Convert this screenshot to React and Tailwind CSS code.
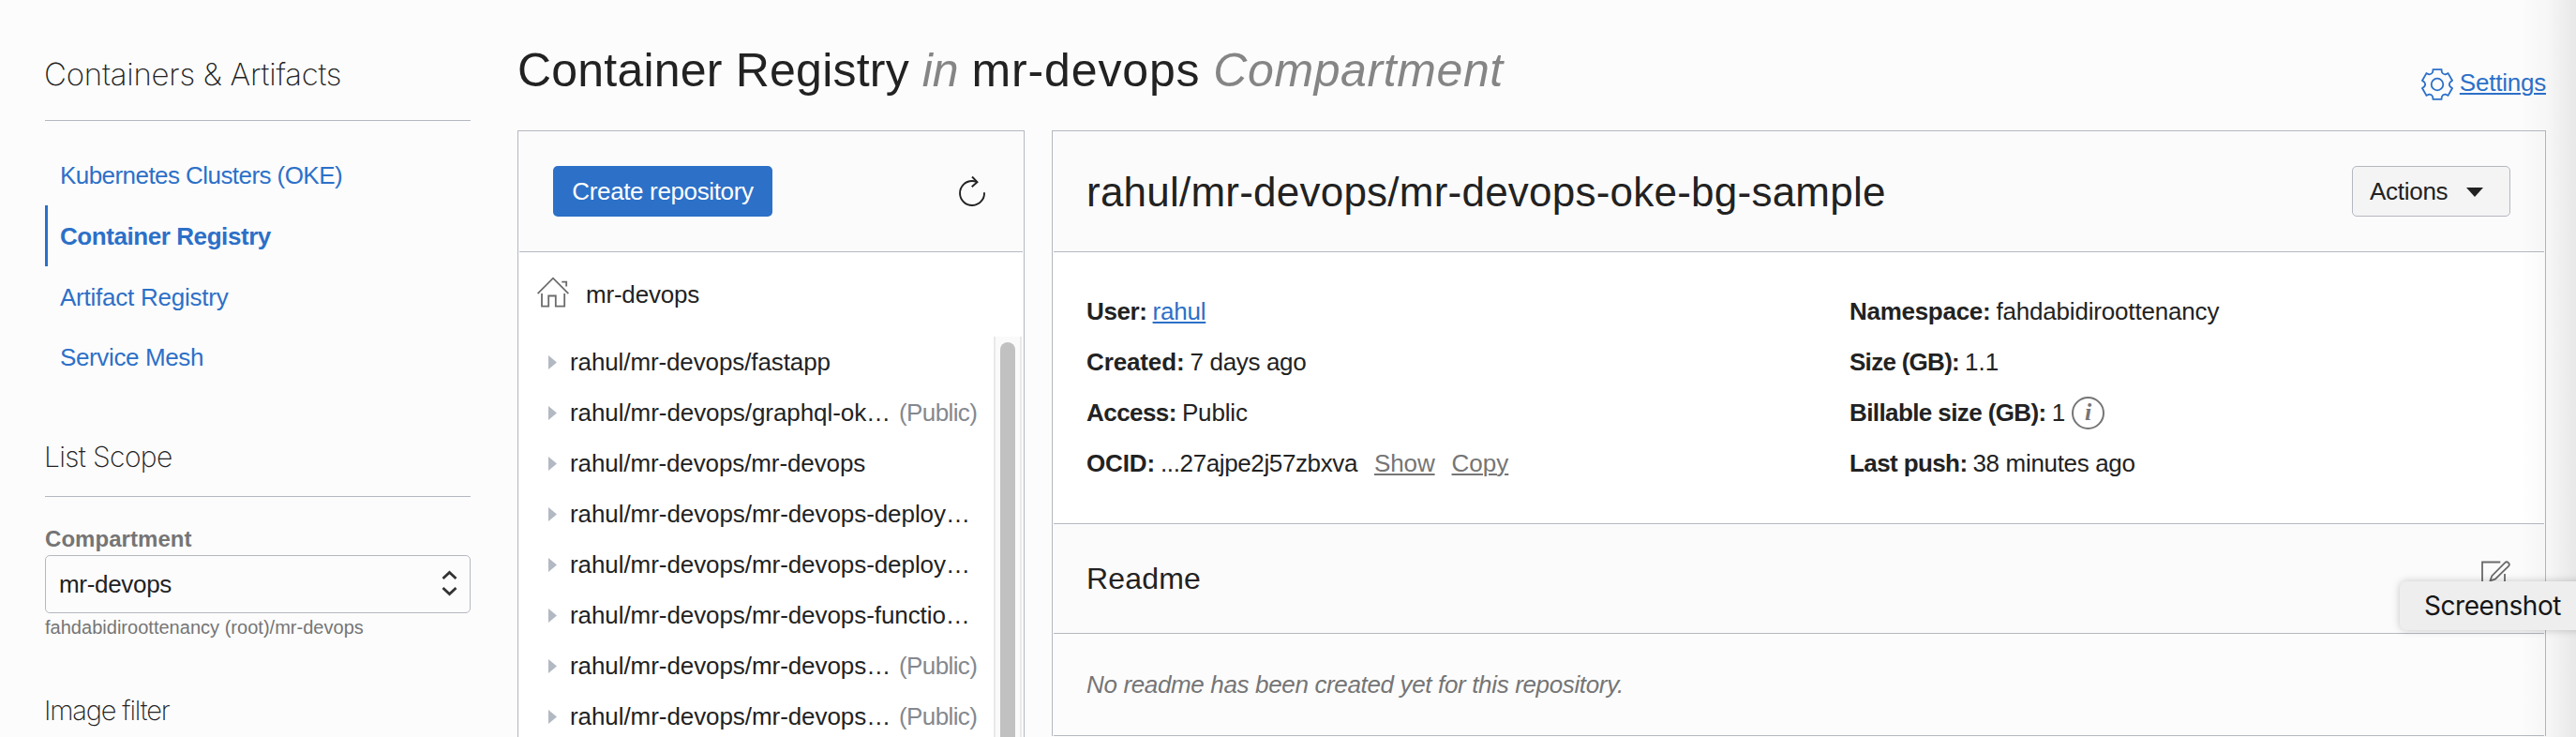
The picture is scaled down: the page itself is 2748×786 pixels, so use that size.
import React from "react";

const repositories = [
  { name: "rahul/mr-devops/fastapp", tight: true },
  { name: "rahul/mr-devops/graphql-ok…", isPublic: true },
  { name: "rahul/mr-devops/mr-devops", tight: true },
  { name: "rahul/mr-devops/mr-devops-deploy…" },
  { name: "rahul/mr-devops/mr-devops-deploy…" },
  { name: "rahul/mr-devops/mr-devops-functio…" },
  { name: "rahul/mr-devops/mr-devops…", isPublic: true },
  { name: "rahul/mr-devops/mr-devops…", isPublic: true },
];

function gearPath() {
  const rotate = (x, y, deg) => {
    const a = (deg * Math.PI) / 180;
    return `${(x * Math.cos(a) - y * Math.sin(a) + 17).toFixed(2)} ${(x * Math.sin(a) + y * Math.cos(a) + 17).toFixed(2)}`;
  };
  let d = "";
  for (let k = 0; k < 6; k++) {
    const t = k * 60;
    d += `${k ? "L" : "M"}${rotate(-4.5, -15.9, t)}L${rotate(4.5, -15.9, t)}L${rotate(4.9, -13, t)}Q${rotate(6, -10.4, t)} ${rotate(-4.9, -13, t + 60)}`;
  }
  return d + "Z";
}

function GearIcon() {
  return (
    <svg width="34" height="34" viewBox="0 0 34 34" fill="none" stroke="#2c70c8" strokeWidth="1.8" className="shrink-0">
      <path d={gearPath()} />
      <circle cx="17" cy="17" r="6.3" />
    </svg>
  );
}

function RefreshIcon() {
  return (
    <svg width="30" height="34" viewBox="0 0 30 34" fill="none" stroke="#222" strokeWidth="1.9">
      <path d="M28 18.2A13 13 0 1 1 15 6Q17.500 6 20 7" />
      <path d="M15 1.500L20.500 7.200L14.700 12.300" />
    </svg>
  );
}

function HomeIcon() {
  return (
    <svg width="34" height="34" viewBox="0 0 34 34" fill="none" stroke="#6b6b6b" strokeWidth="1.8">
      <path d="M.6 18.200L17 1.700L33.400 18.200" />
      <path d="M26.300 5.700H31.200V10.500" />
      <path d="M5 18V31.700H12.200V20.500H19.800V31.700H29.200V18" />
    </svg>
  );
}

function EditIcon() {
  return (
    <svg width="34" height="34" viewBox="0 0 34 34" fill="none" stroke="#6b6b6b" strokeWidth="1.8">
      <path d="M21.300 2.500H2V28.500H26V15" />
      <path d="M10.500 22.300L12.300 17.200L26.200 3.200A2.500 2.500 0 0 1 30 6.800L15.800 20.600Z" />
    </svg>
  );
}

function Sidebar() {
  return (
    <aside className="flex h-full w-[454px] shrink-0 flex-col pt-[59px]">
      <h2 className="whitespace-nowrap border-b border-[#b4b8c0] pb-[29px] font-[Inter,sans-serif] text-[33px] font-extralight leading-[40px] tracking-[-0.24px] -indent-[1px]">
        Containers &amp; Artifacts
      </h2>
      <nav className="mt-[25px] flex flex-col whitespace-nowrap text-[#2c70c8]">
        <a className="h-[65px] pl-[16px] pt-[20px] leading-[26px] tracking-[-0.56px]">Kubernetes Clusters (OKE)</a>
        <a className="h-[65px] border-l-[3px] border-[#2c70c8] pl-[13px] pt-[20px] font-bold leading-[26px] tracking-[-0.43px]">Container Registry</a>
        <a className="h-[65px] pl-[16px] pt-[20px] leading-[26px] tracking-[-0.24px]">Artifact Registry</a>
        <a className="h-[65px] pl-[16px] pt-[19px] leading-[26px] tracking-[-0.37px]">Service Mesh</a>
      </nav>
      <h3 className="mt-[55px] border-b border-[#b4b8c0] pb-[24px] font-[Inter,sans-serif] text-[30px] font-extralight leading-[36px] tracking-[-0.64px] -indent-[1px]">
        List Scope
      </h3>
      <label className="mt-[30px] text-[24px] font-bold leading-[30px] tracking-[0.05px] text-[#757575]">Compartment</label>
      <div className="mt-[2px] flex h-[62px] items-center justify-between rounded-[5px] border border-[#b4b8c0] pl-[14px] pr-[13px]">
        <span className="tracking-[-0.31px]">mr-devops</span>
        <svg width="17" height="28" viewBox="0 0 17 28" fill="none" stroke="#333" strokeWidth="2.800" className="-mt-[3px]">
          <path d="M1.500 9L8.500 2.500L15.500 9M1.500 19L8.500 25.500L15.500 19" />
        </svg>
      </div>
      <p className="mt-[3px] whitespace-nowrap text-[20px] leading-[24px] tracking-[0.02px] text-[#757575]">fahdabidiroottenancy (root)/mr-devops</p>
      <h3 className="mt-[59px] font-[Inter,sans-serif] text-[29px] font-extralight leading-[36px] tracking-[-1.15px] -indent-[1px]">
        Image filter
      </h3>
    </aside>
  );
}

function RepositoryList() {
  return (
    <section className="flex h-[647px] w-[541px] shrink-0 flex-col overflow-hidden border border-b-0 border-[#b4b8c0] px-px">
      <div className="flex h-[129px] shrink-0 items-center justify-between border-b border-[#b4b8c0] bg-[#fbfbfb] pl-[36px] pr-[39px]">
        <button className="h-[54px] w-[234px] rounded-[5px] bg-[#2c70c8] tracking-[-0.36px] text-white">Create repository</button>
        <RefreshIcon />
      </div>
      <div className="flex h-[90px] shrink-0 items-center bg-white pl-[19px]">
        <span className="-mt-[5px]">
          <HomeIcon />
        </span>
        <span className="ml-[18px] tracking-[-0.2px]">mr-devops</span>
      </div>
      <div className="flex bg-white">
        <ul className="w-[506px]">
          {repositories.map((repo, i) => (
            <li key={i} className="flex h-[54px] items-center whitespace-nowrap pl-[31px]">
              <svg width="9" height="15" viewBox="0 0 9 15" fill="#b3b9c3">
                <path d="M0 0L9 7.500L0 15Z" />
              </svg>
              <span className={repo.tight ? "ml-[14px] tracking-[-0.11px]" : "ml-[14px] w-[351px] tracking-[-0.07px]"}>{repo.name}</span>
              {repo.isPublic && <span className="tracking-[-0.61px] text-[#85888d]">(Public)</span>}
            </li>
          ))}
        </ul>
        <div className="flex w-[30px] justify-center border-l-2 border-r-2 border-[#e9e9e9] bg-[#fafafa] pt-[6px]">
          <div className="h-[600px] w-[16px] rounded-full bg-[#c1c1c1]" />
        </div>
      </div>
    </section>
  );
}

function Row({ label, labelClass, children }) {
  return (
    <div className="flex h-[54px] items-center gap-1.5 whitespace-nowrap">
      <span className={labelClass}>{label}</span>
      {children}
    </div>
  );
}

function RepositoryDetails() {
  return (
    <section className="flex h-[646px] w-[1594px] shrink-0 flex-col border border-b-0 border-[#b4b8c0] px-px">
      <div className="flex h-[129px] shrink-0 items-center justify-between border-b border-[#b4b8c0] bg-[#fbfbfb] pl-[35px] pr-[36px]">
        <h2 className="mt-[1px] whitespace-nowrap text-[44px] leading-[52px] tracking-[0.23px]">rahul/mr-devops/mr-devops-oke-bg-sample</h2>
        <button className="flex h-[54px] w-[169px] items-center rounded-[5px] border border-[#b4b8c0] bg-[#f4f4f4] pl-[18px]">
          <span className="tracking-[-0.28px]">Actions</span>
          <svg width="18" height="10" viewBox="0 0 18 10" fill="#222" className="ml-[20px] mt-[2px]">
            <path d="M0 0H18L9 10Z" />
          </svg>
        </button>
      </div>
      <div className="flex h-[290px] shrink-0 border-b border-[#b4b8c0] bg-white pl-[35px] pt-[36px]">
        <div className="w-[814px]">
          <Row label="User:" labelClass="font-bold tracking-[-0.38px]">
            <a className="tracking-[-0.23px] text-[#2c70c8] underline decoration-2 underline-offset-2">rahul</a>
          </Row>
          <Row label="Created:" labelClass="font-bold tracking-[-0.12px]">
            <span className="tracking-[-0.34px]">7 days ago</span>
          </Row>
          <Row label="Access:" labelClass="font-bold tracking-[-0.55px]">
            <span className="tracking-[-0.14px]">Public</span>
          </Row>
          <Row label="OCID:" labelClass="font-bold tracking-[-0.13px]">
            <span className="tracking-[-0.38px]">...27ajpe2j57zbxva</span>
            <a className="ml-[12px] tracking-[-0.12px] text-[#757575] underline decoration-2 underline-offset-2">Show</a>
            <a className="ml-[12px] text-[#757575] underline decoration-2 underline-offset-2">Copy</a>
          </Row>
        </div>
        <div>
          <Row label="Namespace:" labelClass="font-bold tracking-[-0.28px]">
            <span className="tracking-[-0.18px]">fahdabidiroottenancy</span>
          </Row>
          <Row label="Size (GB):" labelClass="font-bold tracking-[-0.72px]">
            <span>1.1</span>
          </Row>
          <Row label="Billable size (GB):" labelClass="font-bold tracking-[-0.6px]">
            <span>1</span>
            <span className="ml-[1px] flex size-[35px] items-center justify-center rounded-full border-2 border-[#757575] font-['Liberation_Serif',serif] text-[26px] font-bold italic leading-none text-[#757575]">
              i
            </span>
          </Row>
          <Row label="Last push:" labelClass="font-bold tracking-[-0.6px]">
            <span className="tracking-[-0.33px]">38 minutes ago</span>
          </Row>
        </div>
      </div>
      <div className="flex h-[117px] shrink-0 items-center justify-between border-b border-[#b4b8c0] bg-[#fbfbfb] pl-[35px] pr-[34px]">
        <h3 className="text-[32px] leading-[40px] tracking-[0.17px]">Readme</h3>
        <span className="-mt-[6px]">
          <EditIcon />
        </span>
      </div>
      <div className="flex h-[109px] shrink-0 items-center border-b border-[#b4b8c0] pl-[35px]">
        <p className="italic tracking-[-0.35px] text-[#757575]">No readme has been created yet for this repository.</p>
      </div>
    </section>
  );
}

export default function App() {
  return (
    <div className="relative flex h-[786px] w-[2748px] overflow-hidden bg-[#fcfcfc] pl-[48px] font-['Liberation_Sans',Arial,sans-serif] text-[26px] leading-[30px] text-[#222]">
      <Sidebar />
      <main className="ml-[50px] w-[2164px] shrink-0">
        <header className="flex h-[139px] items-start justify-between">
          <h1 className="mt-[45px] whitespace-nowrap text-[50px] leading-[60px]">
            <span className="tracking-[0.21px]">Container Registry</span> <em className="text-[#858585]">in</em>{" "}
            <span className="tracking-[0.85px]">mr-devops</span> <em className="tracking-[0.6px] text-[#858585]">Compartment</em>
          </h1>
          <a className="mt-[73px] flex items-center gap-[7px] text-[#2c70c8]">
            <GearIcon />
            <span className="-mt-[4px] tracking-[-0.22px] underline decoration-2 underline-offset-2">Settings</span>
          </a>
        </header>
        <div className="flex items-start gap-[29px]">
          <RepositoryList />
          <RepositoryDetails />
        </div>
      </main>
      <div className="absolute inset-y-0 right-0 w-[60px] bg-gradient-to-r from-black/0 via-black/[0.025] to-black/[0.08]" />
      <div className="absolute left-[2560px] top-[620px] flex h-[52px] w-[220px] items-center rounded-[7px] bg-[#eeeeee] pl-[26px] font-[Inter,sans-serif] text-[28px] tracking-[-0.45px] shadow-[0_0_8px_rgba(0,0,0,0.22)] text-[#161616]">
        Screenshot
      </div>
    </div>
  );
}
